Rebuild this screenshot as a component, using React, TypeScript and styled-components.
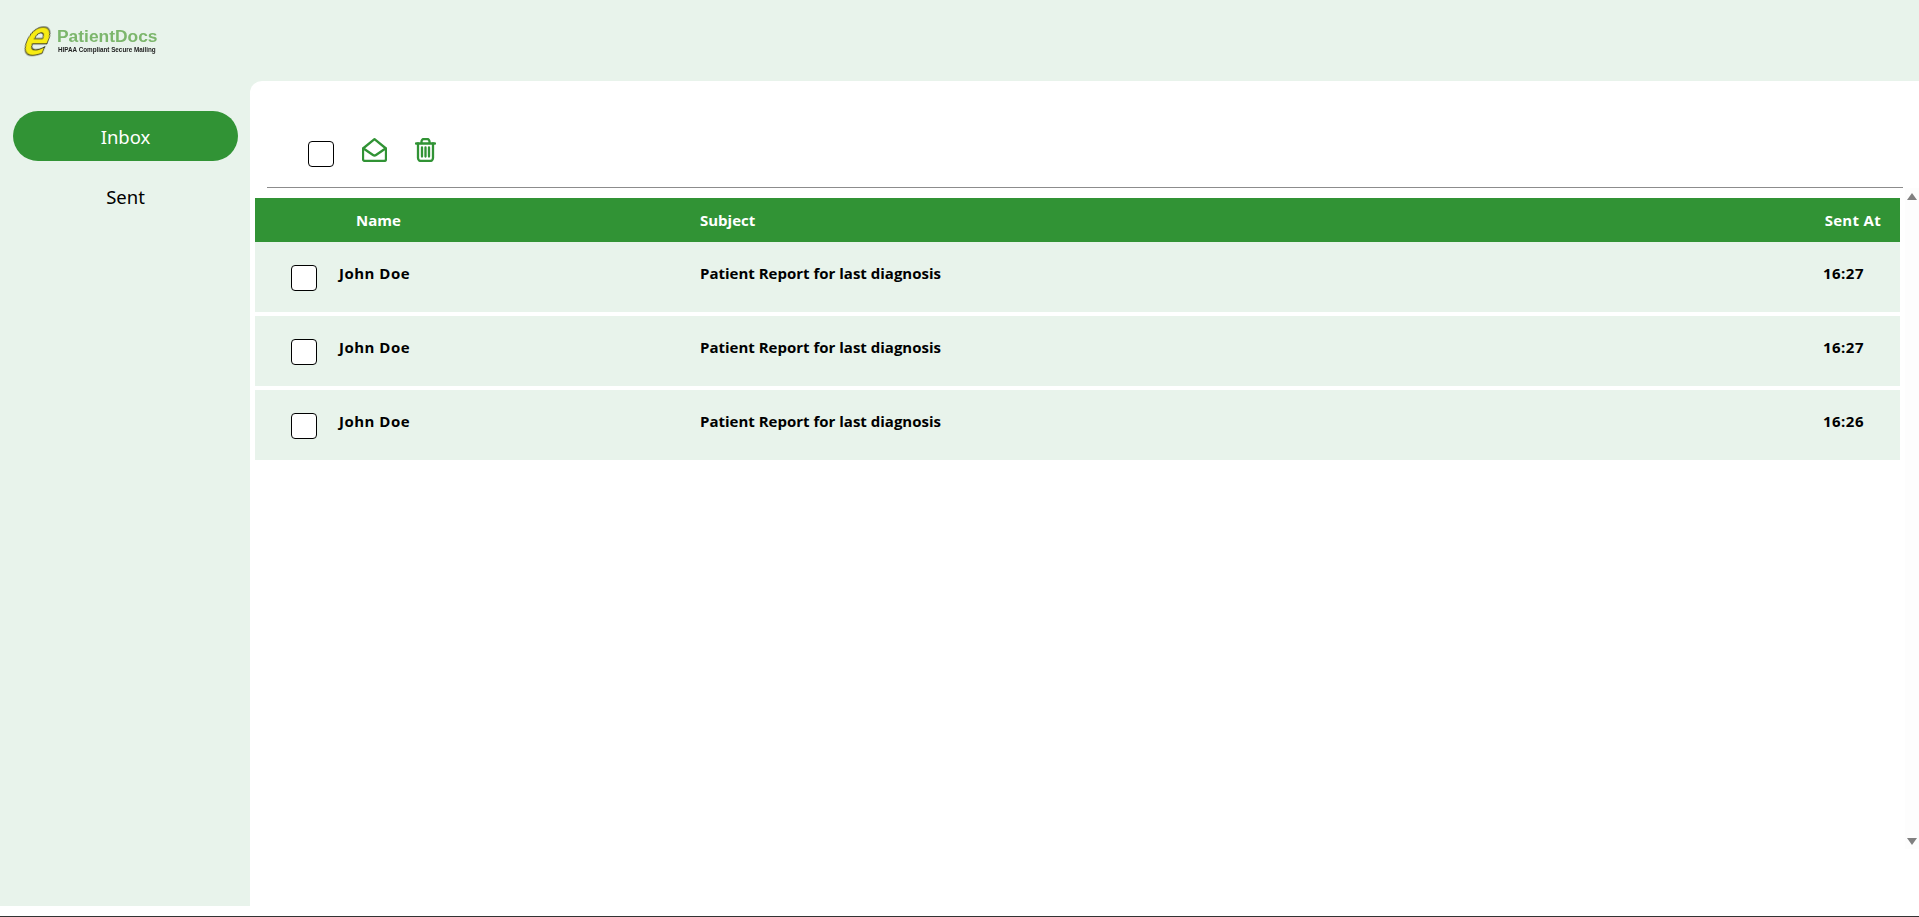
import React from "react";
import styled, { createGlobalStyle } from "styled-components";

const Global = createGlobalStyle`
  html, body { margin: 0; padding: 0; background: #fff; }
  body { font-family: "Open Sans", "Noto Sans", sans-serif; }
`;

const Page = styled.div`
  width: 1919px;
  height: 917px;
  display: flex;
  flex-direction: column;
  box-sizing: border-box;
  border-bottom: 1px solid #333;
  overflow: hidden;
`;
const Shell = styled.div`
  height: 906px;
  background: #e8f3eb;
  display: flex;
  flex-direction: column;
`;
const Header = styled.header`
  height: 81px;
  flex: none;
  box-sizing: border-box;
  padding: 22px 0 0 25px;
`;
const Logo = styled.div`
  display: flex;
  align-items: flex-start;
  height: 36px;
  filter: blur(0.35px);
`;
const LogoMark = styled.span`
  width: 32px;
  flex: none;
  font-family: "DejaVu Sans", sans-serif;
  font-weight: 700;
  font-size: 50px;
  line-height: 30px;
  color: #f7ec13;
  -webkit-text-stroke: 1px #222;
  transform: skewX(-22deg) scaleX(0.72);
  transform-origin: 6px 16px;
`;
const LogoWords = styled.div`
  display: flex;
  flex-direction: column;
  margin: 6px 0 0 0;
  font-family: "Liberation Sans", sans-serif;
`;
const LogoName = styled.span`
  font-size: 17.4px;
  line-height: 17px;
  font-weight: 700;
  color: #7cb66c;
`;
const LogoTag = styled.span`
  font-size: 6.3px;
  line-height: 9px;
  font-weight: 700;
  color: #222;
  white-space: nowrap;
  margin-left: 1px;
`;
const Body = styled.div`
  flex: 1;
  display: flex;
  min-height: 0;
`;
const Sidebar = styled.nav`
  width: 250px;
  flex: none;
  box-sizing: border-box;
  padding: 30px 12px 0 13px;
  display: flex;
  flex-direction: column;
  gap: 10px;
`;
const NavItem = styled.div<{ $active?: boolean }>`
  height: 50px;
  border-radius: 25px;
  display: flex;
  align-items: center;
  justify-content: center;
  font-family: "Noto Sans", sans-serif;
  font-size: 18.5px;
  color: ${(p) => (p.$active ? "#fff" : "#000")};
  background: ${(p) => (p.$active ? "#319335" : "transparent")};
`;
const Main = styled.main`
  flex: 1;
  background: #fff;
  border-top-left-radius: 12px;
  display: flex;
  flex-direction: column;
  min-width: 0;
`;
const Toolbar = styled.div`
  height: 107px;
  flex: none;
  box-sizing: border-box;
  margin: 0 16px 0 17px;
  padding: 57px 0 0 41px;
  border-bottom: 1px solid #8c8c8c;
  display: flex;
  align-items: flex-start;
`;
const Check = styled.span`
  display: block;
  width: 26px;
  height: 26px;
  flex: none;
  box-sizing: border-box;
  border: 1px solid #000;
  border-radius: 4px;
  background: #fff;
`;
const HeadCheck = styled(Check)`
  margin-top: 3px;
`;
const ToolIcon = styled.svg<{ $gap: number }>`
  flex: none;
  margin-left: ${(p) => p.$gap}px;
  fill: none;
  stroke: #319335;
  stroke-width: 2.3;
  stroke-linejoin: round;
  stroke-linecap: round;
`;
const Content = styled.div`
  flex: 1;
  display: flex;
  min-height: 0;
  padding-left: 5px;
`;
const Table = styled.div`
  width: 1645px;
  padding-top: 10px;
  flex: none;
  display: flex;
  flex-direction: column;
  gap: 4px;
`;
const HeadRow = styled.div`
  height: 44px;
  background: #319335;
  color: #fff;
  font-weight: 700;
  font-size: 15px;
  display: grid;
  grid-template-columns: 101px 344px 1fr auto;
  align-items: center;
  padding-right: 19px;
  margin-bottom: -4px;
`;
const HeadCell = styled.span<{ $col: number; $spacing?: number }>`
  grid-column: ${(p) => p.$col};
  letter-spacing: ${(p) => p.$spacing ?? 0}px;
`;
const Row = styled.div`
  height: 70px;
  background: #e8f3eb;
  color: #000;
  font-weight: 700;
  font-size: 15px;
  display: grid;
  grid-template-columns: 84px 361px 1fr auto;
  padding-right: 36px;
  box-sizing: border-box;
`;
const RowCheck = styled(Check)`
  margin: 23px 0 0 36px;
`;
const Cell = styled.span<{ $spacing?: number }>`
  line-height: 20px;
  padding-top: 21px;
  letter-spacing: ${(p) => p.$spacing ?? 0}px;
`;
const Scrollbar = styled.div`
  width: 14px;
  margin-left: 5px;
  height: 661px;
  background: #fdfdfd;
  display: flex;
  flex-direction: column;
  justify-content: space-between;
  align-items: center;
  padding: 5px 0 4px;
  box-sizing: border-box;
`;
const Arrow = styled.svg`
  fill: #808080;
`;

const rows = [
  { name: "John Doe", subject: "Patient Report for last diagnosis", at: "16:27" },
  { name: "John Doe", subject: "Patient Report for last diagnosis", at: "16:27" },
  { name: "John Doe", subject: "Patient Report for last diagnosis", at: "16:26" },
];

export default function App() {
  return (
    <Page>
      <Global />
      <Shell>
        <Header>
          <Logo>
            <LogoMark>e</LogoMark>
            <LogoWords>
              <LogoName>PatientDocs</LogoName>
              <LogoTag>HIPAA Compliant Secure Mailing</LogoTag>
            </LogoWords>
          </Logo>
        </Header>
        <Body>
          <Sidebar>
            <NavItem $active>Inbox</NavItem>
            <NavItem>Sent</NavItem>
          </Sidebar>
          <Main>
            <Toolbar>
              <HeadCheck />
              <ToolIcon $gap={28} width="25" height="24" viewBox="0 0 25 24">
                <path d="M1 10.5 12.5 1.2 24 10.5V21a2 2 0 0 1-2 2H3a2 2 0 0 1-2-2Z" />
                <path d="M1.5 10.5 11 17a2.6 2.6 0 0 0 3 0l9.5-6.5" />
              </ToolIcon>
              <ToolIcon $gap={28} width="21" height="24" viewBox="0 0 21 24">
                <path d="M1 5.5h19" />
                <path d="M6.5 5V3.5A2.5 2.5 0 0 1 9 1h3a2.5 2.5 0 0 1 2.5 2.5V5" />
                <path d="M3 5.5V20a3 3 0 0 0 3 3h9a3 3 0 0 0 3-3V5.5" />
                <path d="M7 9.5v9M10.5 9.5v9M14 9.5v9" />
              </ToolIcon>
            </Toolbar>
            <Content>
              <Table>
                <HeadRow>
                  <HeadCell $col={2}>Name</HeadCell>
                  <HeadCell $col={3}>Subject</HeadCell>
                  <HeadCell $col={4} $spacing={0.3}>Sent At</HeadCell>
                </HeadRow>
                {rows.map((r, i) => (
                  <Row key={i}>
                    <RowCheck />
                    <Cell $spacing={0.5}>{r.name}</Cell>
                    <Cell>{r.subject}</Cell>
                    <Cell $spacing={0.5}>{r.at}</Cell>
                  </Row>
                ))}
              </Table>
              <Scrollbar>
                <Arrow width="10" height="7" viewBox="0 0 10 7"><path d="M5 0 10 7H0Z" /></Arrow>
                <Arrow width="10" height="7" viewBox="0 0 10 7"><path d="M0 0H10L5 7Z" /></Arrow>
              </Scrollbar>
            </Content>
          </Main>
        </Body>
      </Shell>
    </Page>
  );
}
